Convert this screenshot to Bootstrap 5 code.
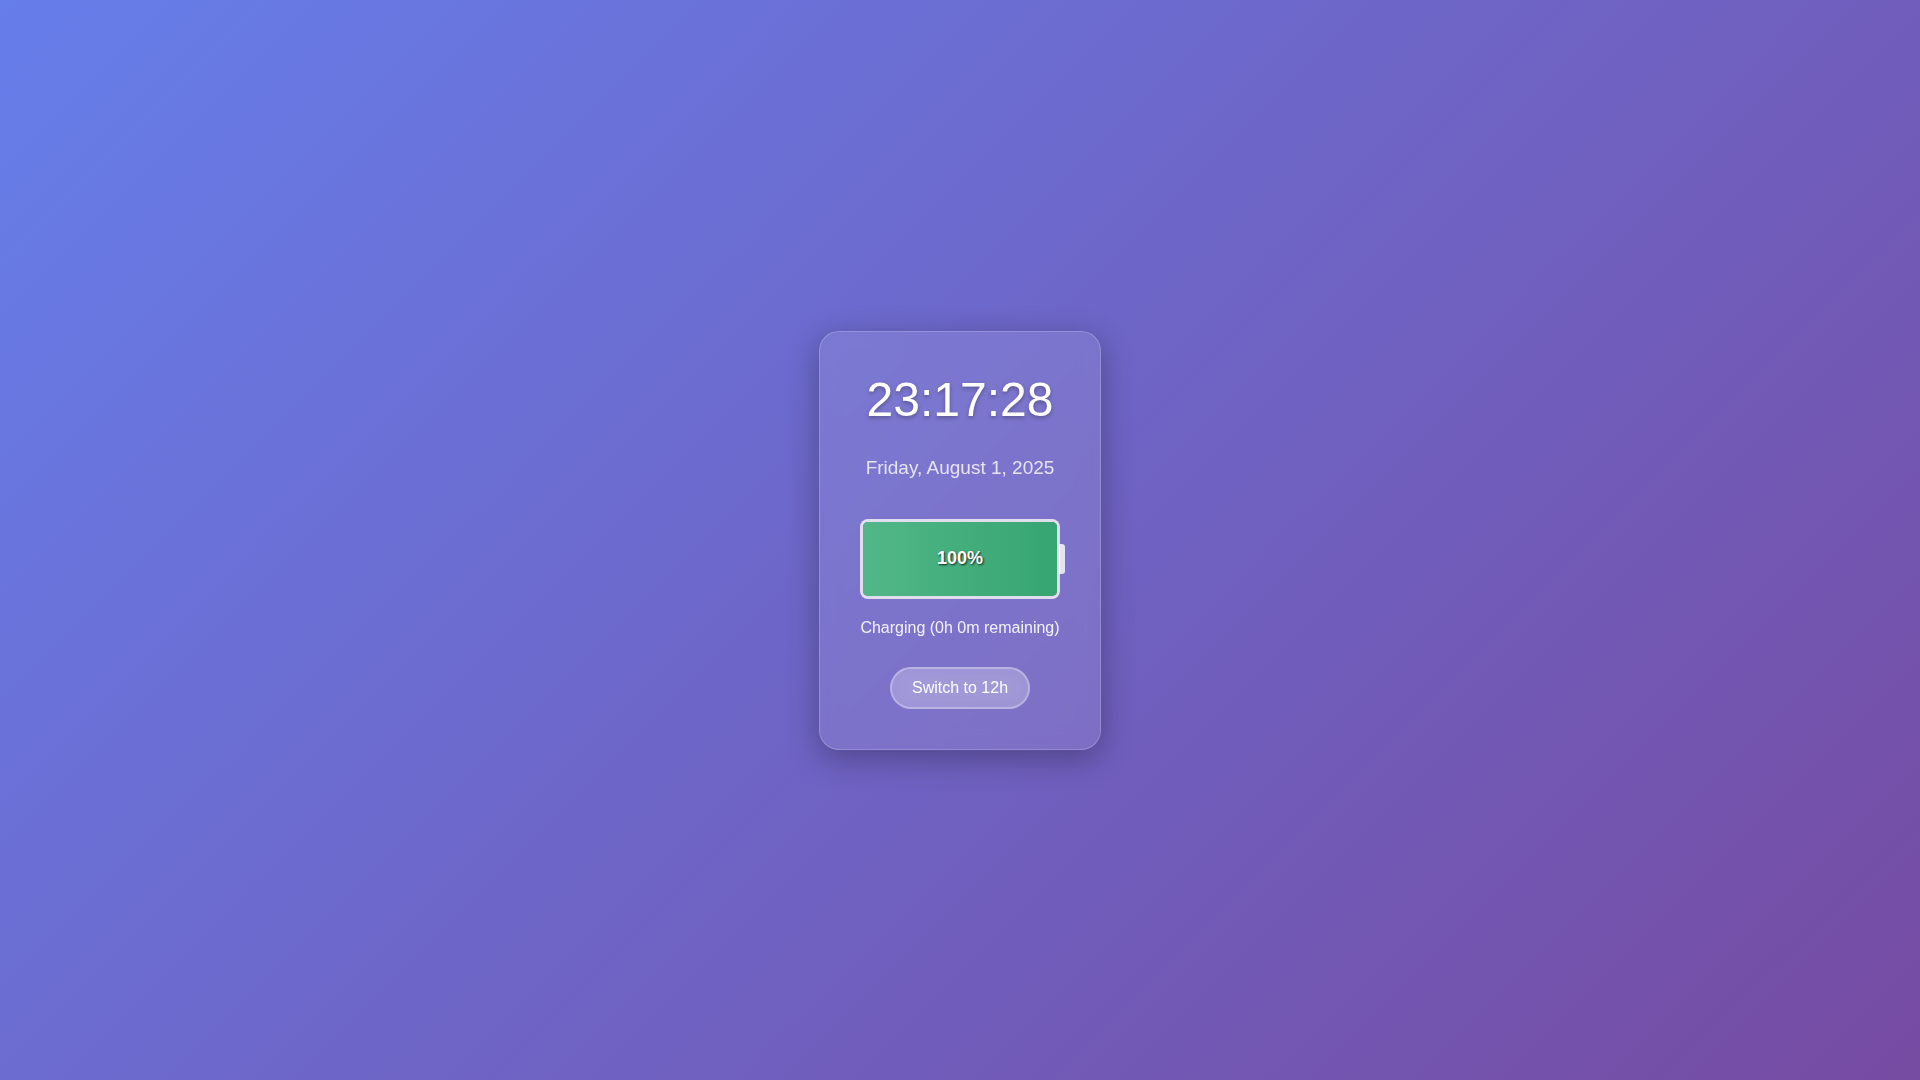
<!DOCTYPE html>
<html lang="en">
<head>
<meta charset="utf-8">
<meta name="viewport" content="width=device-width, initial-scale=1">
<title>Clock and battery</title>
<link href="https://cdn.jsdelivr.net/npm/bootstrap@5.3.0/dist/css/bootstrap.min.css" rel="stylesheet">
<style>
  body {
    font-family: "Liberation Sans", Arial, sans-serif;
    line-height: normal;
    color: #fff;
    background: linear-gradient(135deg, #667eea 0%, #764ba2 100%);
  }
  .glass {
    padding: 40px;
    background: rgba(255, 255, 255, .1);
    border: 1px solid rgba(255, 255, 255, .2);
    border-radius: 20px;
    box-shadow: 0 8px 32px rgba(0, 0, 0, .3);
    backdrop-filter: blur(10px);
  }
  .clock {
    font-size: 48px;
    line-height: 55px;
    margin-bottom: 30px;
    text-shadow: 0 2px 4px rgba(0, 0, 0, .3);
  }
  .date {
    font-size: 19px;
    line-height: 22px;
    margin-bottom: 40px;
    opacity: .8;
  }
  .battery {
    width: 200px;
    height: 80px;
    background: rgba(0, 0, 0, .2);
    border: 3px solid rgba(255, 255, 255, .8);
    border-radius: 8px;
  }
  .battery::after {
    content: "";
    position: absolute;
    top: 50%;
    right: -8px;
    width: 6px;
    height: 30px;
    transform: translateY(-50%);
    background: rgba(255, 255, 255, .8);
    border-radius: 0 3px 3px 0;
  }
  .charge {
    border-radius: 5px;
    background: linear-gradient(90deg, #52b788, #36a571);
  }
  .level {
    font-size: 18px;
    text-shadow: 1px 1px 2px rgba(0, 0, 0, .8);
  }
  .status {
    line-height: 18px;
    margin: 20px 0 30px;
    opacity: .9;
  }
  .toggle {
    --bs-btn-padding-x: 20px;
    --bs-btn-padding-y: 10px;
    --bs-btn-line-height: 18px;
    --bs-btn-color: #fff;
    --bs-btn-bg: rgba(255, 255, 255, .2);
    --bs-btn-border-color: rgba(255, 255, 255, .3);
    --bs-btn-border-width: 2px;
    --bs-btn-hover-color: #fff;
    --bs-btn-hover-bg: rgba(255, 255, 255, .3);
    --bs-btn-hover-border-color: rgba(255, 255, 255, .5);
    line-height: 18px;
    backdrop-filter: blur(10px);
  }
</style>
</head>
<body class="min-vh-100 d-flex align-items-center justify-content-center">
<main class="glass text-center">
  <div class="clock"><time datetime="2025-08-01T23:17:28">23:17:28</time></div>
  <div class="date"><time datetime="2025-08-01">Friday, August 1, 2025</time></div>
  <div class="battery position-relative mx-auto">
    <div class="charge h-100 d-flex align-items-center justify-content-center" style="width: 100%">
      <span class="level fw-bold">100%</span>
    </div>
  </div>
  <div class="status">Charging (0h 0m remaining)</div>
  <button type="button" class="toggle btn rounded-pill">Switch to 12h</button>
</main>
<script src="https://cdn.jsdelivr.net/npm/bootstrap@5.3.0/dist/js/bootstrap.bundle.min.js"></script>
</body>
</html>
